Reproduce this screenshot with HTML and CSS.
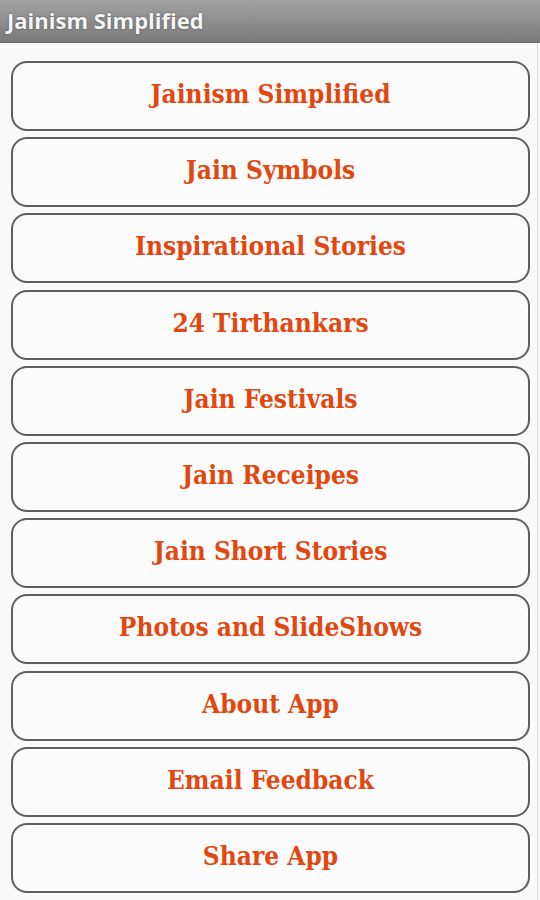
FILE: index.html
```html
<!DOCTYPE html>
<html>
<head>
<meta charset="utf-8">
<link rel="stylesheet" href="styles.css">
</head>
<body>
<div class="titlebar"><span class="title">Jainism Simplified</span></div>
<div class="content">
  <div class="menu">
    <div class="btn">Jainism Simplified</div>
    <div class="btn">Jain Symbols</div>
    <div class="btn">Inspirational Stories</div>
    <div class="btn">24 Tirthankars</div>
    <div class="btn">Jain Festivals</div>
    <div class="btn">Jain Receipes</div>
    <div class="btn">Jain Short Stories</div>
    <div class="btn">Photos and SlideShows</div>
    <div class="btn">About App</div>
    <div class="btn">Email Feedback</div>
    <div class="btn">Share App</div>
  </div>
</div>
</body>
</html>
```
FILE: styles.css
```css
html, body {
  margin: 0;
  padding: 0;
  background: #f8f8f8;
}
body {
  width: 540px;
  height: 900px;
  overflow: hidden;
}
.titlebar {
  height: 43px;
  background: linear-gradient(#a2a2a2, #7a7a7a);
  border-bottom: 1px solid #6a6a6a;
  display: flex;
  align-items: center;
  padding-left: 7px;
  box-sizing: border-box;
}
.title {
  font-family: "Open Sans", "DejaVu Sans", sans-serif;
  font-weight: 700;
  font-size: 22px;
  line-height: 1;
  color: #f6f6f6;
  text-shadow: 0 0 2px rgba(0,0,0,0.55);
  margin-top: -2px;
}
.content {
  height: 857px;
  border-right: 1px solid #dcdcdc;
  width: 537px;
  background: #f9f9f9;
}
.menu {
  padding: 18px 0 0 11px;
  display: flex;
  flex-direction: column;
  gap: 6.2px;
}
.btn {
  width: 519px;
  height: 70px;
  box-sizing: border-box;
  border: 2px solid #5e5e5e;
  border-radius: 16px;
  background: #fbfbfb;
  display: flex;
  align-items: center;
  justify-content: center;
  font-family: "DejaVu Serif Condensed", "DejaVu Serif", serif;
  font-stretch: condensed;
  font-weight: 700;
  font-size: 26px;
  color: #e2470f;
  padding-bottom: 4px;
}
```
